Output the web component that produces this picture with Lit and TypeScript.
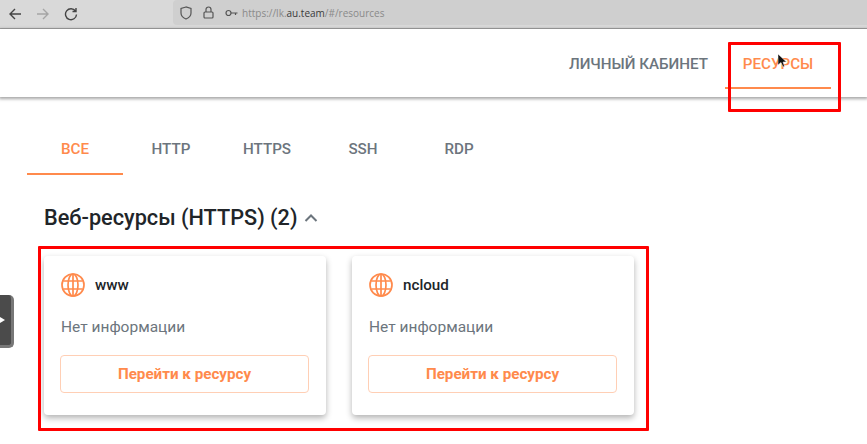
import { LitElement, html, css, svg } from "lit";
import { customElement } from "lit/decorators.js";

const globe = svg`<svg class="globe" viewBox="0 0 24 24" fill="none" stroke="#ff8a4c" stroke-width="1.7"><circle cx="12" cy="12" r="11"/><ellipse cx="12" cy="12" rx="5" ry="11"/><path d="M12 1v22M2.200 8h19.600M2.200 16h19.600"/></svg>`;

@customElement("app-root")
export class AppRoot extends LitElement {
  static styles = css`
    :host { display: block; position: relative; width: 867px; height: 444px; overflow: hidden; background: #fff; font-family: Roboto, "Liberation Sans", sans-serif; color: #212529; }
    .browser { height: 28px; background: #d9d9d9; border-bottom: 1px solid #a9a9a9; display: flex; align-items: flex-start; }
    .nav-btns { width: 173px; height: 28px; display: flex; align-items: center; padding-left: 8px; padding-bottom: 1px; box-sizing: border-box; gap: 14px; flex: none; }
    .nav-btns svg { width: 14px; height: 14px; fill: none; stroke: #444; stroke-width: 1.4; }
    .nav-btns svg.off { stroke: #a5a5a5; }
    .urlbar { flex: 1; height: 25px; background: #cfcfcf; border-radius: 4px 0 0 4px; display: flex; align-items: center; padding-left: 7px; gap: 8px; font: 400 10px "Open Sans", sans-serif; color: #8a8a8a; }
    .urlbar svg { flex: none; fill: none; stroke: #555; stroke-width: 1.2; }
    .urlbar b { font-weight: 400; color: #3a3a3a; }
    .url { margin-left: -4px; }
    .header { height: 68px; background: #fff; box-shadow: 0 1px 3px 1px rgba(0,0,0,.35); display: flex; justify-content: flex-end; padding-right: 36px; }
    .hitem { height: 60px; box-sizing: border-box; display: flex; align-items: center; justify-content: center; font-size: 15.2px; font-weight: 500; color: #6c757d; padding-top: 11px; white-space: nowrap; border-bottom: 2px solid transparent; }
    .hitem.lk { width: 139px; margin-right: 17px; }
    .hitem.res { width: 106px; color: #ff8a4c; border-bottom-color: #ff8a4c; }
    .tabs { display: flex; margin: 33px 0 0 27px; }
    .tab { width: 96px; height: 45px; box-sizing: border-box; padding-top: 11px; text-align: center; font-size: 15.2px; font-weight: 500; color: #6c757d; line-height: 17px; }
    .tab.on { color: #ff8a4c; border-bottom: 2px solid #ff8a4c; }
    .heading { display: flex; align-items: center; gap: 6px; margin: 30px 0 0 44px; height: 24px; font-size: 21.7px; font-weight: 500; color: #212529; }
    .heading svg { width: 14px; height: 9px; fill: none; stroke: #6c757d; stroke-width: 2; }
    .cards { display: flex; gap: 26px; margin: 27px 0 0 44px; }
    .card { width: 282px; height: 159px; box-sizing: border-box; background: #fff; border-radius: 4px; box-shadow: 0 3px 6px rgba(0,0,0,.3); padding: 16px 17px 0 16px; display: flex; flex-direction: column; }
    .title { display: flex; align-items: center; gap: 10px; font-size: 15.2px; font-weight: 500; height: 26px; color: #212529; margin-left: 1px; }
    .globe { width: 24px; height: 24px; flex: none; }
    .info { margin-top: 19px; font-size: 15.5px; color: #6c757d; line-height: 20px; margin-left: 1px; }
    .btn { margin-top: 18px; height: 38px; box-sizing: border-box; border: 1px solid #ffcfb5; border-radius: 4px; display: flex; align-items: center; justify-content: center; font-size: 15.2px; font-weight: 700; color: #ff8a4c; }
    .handle { position: absolute; left: 0; top: 295px; width: 11px; height: 50px; background: #4b4b4b; border-right: 3px solid #777; border-bottom: 3px solid #777; border-radius: 0 5px 5px 0; display: flex; align-items: center; }
    .handle i { display: block; width: 0; height: 0; border-left: 5px solid #fff; border-top: 3.5px solid transparent; border-bottom: 3.5px solid transparent; }
    .mark { position: absolute; border: 3px solid #f00; box-sizing: border-box; border-radius: 1px; pointer-events: none; }
    .m1 { left: 728px; top: 42px; width: 113px; height: 70px; }
    .m2 { left: 38px; top: 246px; width: 611px; height: 185px; }
    .cursor { position: absolute; left: 778px; top: 54px; width: 9px; height: 13px; }
  `;

  private card(name: string) {
    return html`<div class="card">
      <div class="title">${globe}<span>${name}</span></div>
      <div class="info">Нет информации</div>
      <div class="btn">Перейти к ресурсу</div>
    </div>`;
  }

  render() {
    return html`
      <div class="browser">
        <div class="nav-btns">
          <svg viewBox="0 0 14 14"><path d="M13 7H2M7 2 2 7l5 5"/></svg>
          <svg class="off" viewBox="0 0 14 14"><path d="M1 7h11M7 2l5 5-5 5"/></svg>
          <svg viewBox="0 0 14 14"><path d="M11.500 4A5.500 5.500 0 1 0 12.500 7.500M12 1v3.500H8.500"/></svg>
        </div>
        <div class="urlbar">
          <svg width="12" height="14" viewBox="0 0 12 14"><path d="M6 1 1 2.500V7c0 3 2.500 5 5 6 2.500-1 5-3 5-6V2.500z"/></svg>
          <svg width="11" height="13" style="margin-left:3px" viewBox="0 0 11 13"><rect x="1" y="6" width="9" height="6" rx="1"/><path d="M3 6V3.500a2.500 2.500 0 0 1 5 0V6"/></svg>
          <svg width="13" height="8" style="margin-left:3px" viewBox="0 0 13 8"><circle cx="3.500" cy="4" r="2.500"/><path d="M6 4h6.500M10.500 4v2"/></svg>
          <span class="url">https://lk.<b>au.team</b>/#/resources</span>
        </div>
      </div>
      <div class="header">
        <div class="hitem lk">ЛИЧНЫЙ КАБИНЕТ</div>
        <div class="hitem res">РЕСУРСЫ</div>
      </div>
      <div class="tabs">
        <div class="tab on">ВСЕ</div>
        <div class="tab">HTTP</div>
        <div class="tab">HTTPS</div>
        <div class="tab">SSH</div>
        <div class="tab">RDP</div>
      </div>
      <div class="heading">Веб-ресурсы (HTTPS) (2)
        <svg viewBox="0 0 14 9"><path d="M1.500 8 7 2.500 12.500 8"/></svg>
      </div>
      <div class="cards">${this.card("www")}${this.card("ncloud")}</div>
      <div class="handle"><i></i></div>
      <div class="mark m1"></div>
      <div class="mark m2"></div>
      <svg class="cursor" viewBox="0 0 9 13"><path d="M0 0v11l3-2.500L5 13l1.500-.7L5 8h3.500z" fill="#111" stroke="#fff" stroke-width=".5"/></svg>
    `;
  }
}
